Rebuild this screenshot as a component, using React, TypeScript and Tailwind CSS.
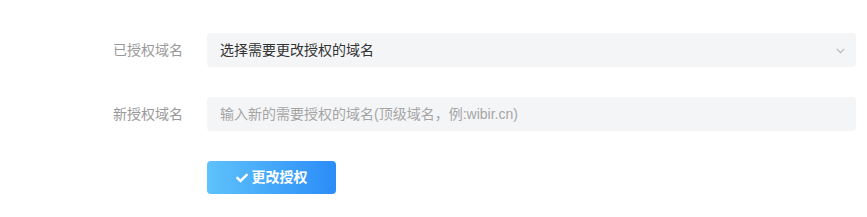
import { FaCheck } from "react-icons/fa";

const FONT = "font-['Helvetica_Neue','Liberation_Sans','Noto_Sans_CJK_SC',sans-serif]";

function FieldRow({ label, children }: { label: string; children: React.ReactNode }) {
  return (
    <div className="flex items-center">
      <div className="w-[183px] shrink-0 text-right text-[14px] text-[#999]">{label}</div>
      <div className="ml-[24px] w-[649px]">{children}</div>
    </div>
  );
}

export default function App() {
  return (
    <div className={`${FONT} h-[217px] w-[867px] bg-white pt-[33px]`}>
      <div className="flex flex-col gap-[30px]">
        <FieldRow label="已授权域名">
          <div className="flex h-[34px] items-center justify-between rounded-[4px] bg-[#f4f5f7] pl-[13px] pr-[11px] text-[14px] text-[#333]">
            <span>选择需要更改授权的域名</span>
            <svg width="9" height="6" viewBox="0 0 9 6" fill="none" className="mt-[1px]">
              <path d="M0.8 0.8 L4.5 4.6 L8.2 0.8" stroke="#b5b5b5" strokeWidth="1.1" />
            </svg>
          </div>
        </FieldRow>
        <FieldRow label="新授权域名">
          <input
            className="h-[34px] w-full rounded-[4px] bg-[#f4f5f7] pl-[13px] text-[14px] text-[#333] outline-none placeholder:text-[#a5a5a5]"
            placeholder="输入新的需要授权的域名(顶级域名，例:wibir.cn)"
          />
        </FieldRow>
        <div className="flex">
          <div className="w-[183px] shrink-0" />
          <button className="ml-[24px] flex h-[33px] w-[129px] items-center justify-center gap-[4px] rounded-[4px] bg-gradient-to-r from-[#5ec2fb] to-[#2b8cf7] text-[14px] font-bold text-white">
            <FaCheck className="h-[12px] w-[12px]" />
            <span>更改授权</span>
          </button>
        </div>
      </div>
    </div>
  );
}
